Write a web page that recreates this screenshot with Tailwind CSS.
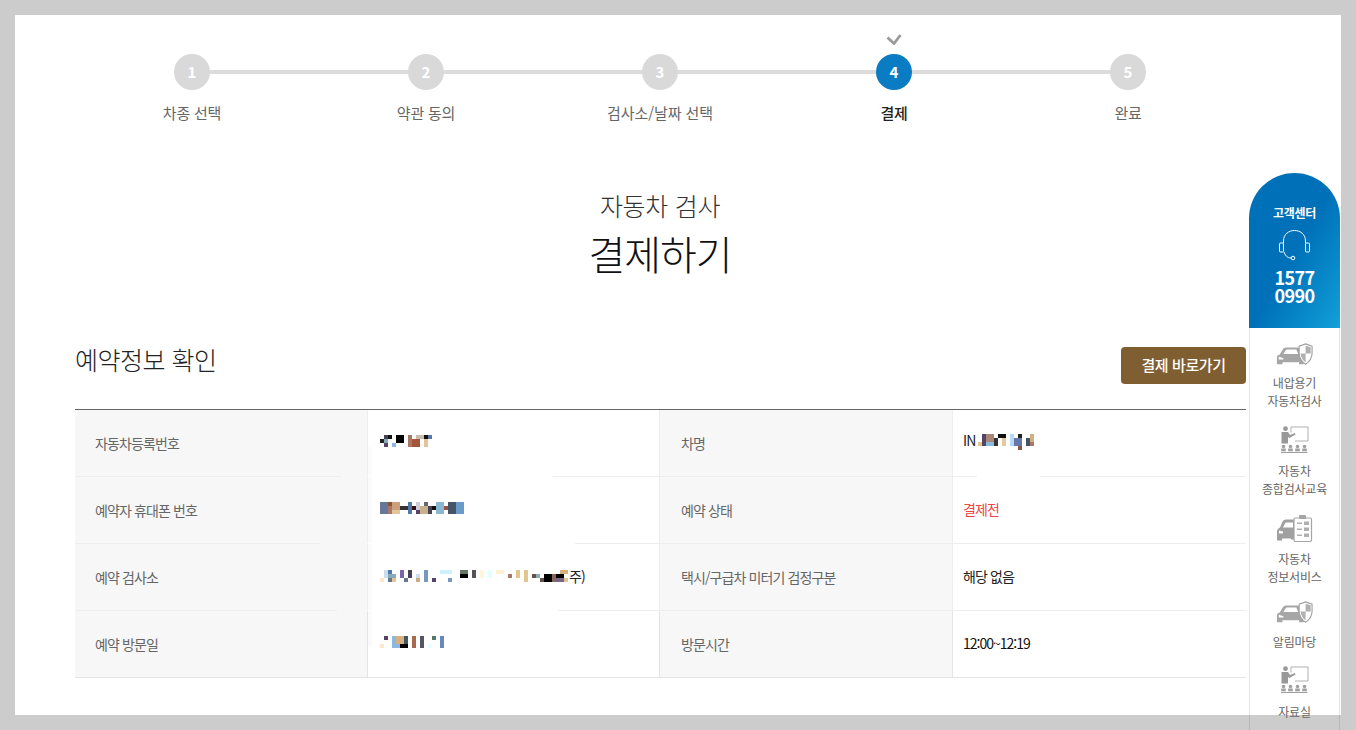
<!DOCTYPE html>
<html lang="ko">
<head>
<meta charset="utf-8">
<title>자동차 검사 결제하기</title>
<script src="https://cdn.jsdelivr.net/npm/@tailwindcss/browser@4"></script>
</head>
<body class="m-0 h-[730px] w-[1356px] overflow-hidden bg-[#cccccc] font-['Noto_Sans_CJK_KR','Noto_Sans',sans-serif]">
<svg class="hidden" width="0" height="0">
  <symbol id="car" viewBox="0 0 40 26">
    <path d="M1 23.500v-7c0-2 1-3 3-3.500l3-5c1-1.500 2-2.500 4-2.500h12c2 0 3 1 4 2l1 3c-1 4 0 9 2 11v2h-5v-2H7v2H1z" fill="#a6a6a6"/>
    <path d="M8 12.500l2.500-4c.5-1 1-1 2-1h9.500l2 5z" fill="#fff"/>
    <path d="M3 15.500l5 1.500v1.500H3z" fill="#fff"/>
    <path d="M32 1.500l7 2.500v7.500c0 5.500-3 9.500-7 12-4-2.500-7-6.500-7-12V4z" fill="#fff" stroke="#a0a0a0" stroke-width="1.200"/>
    <path d="M32 3.500v8.500h5.500V5.200zM32 12v9.500c-3-2-5-5-5.500-9.500z" fill="#b0b0b0"/>
  </symbol>
  <symbol id="teach" viewBox="0 0 30 28">
    <path d="M11 7V1.500h17v14H15" fill="none" stroke="#b0b0b0" stroke-width="1"/>
    <circle cx="5.500" cy="3.200" r="2.400" fill="#999"/>
    <path d="M1.500 6.500h6.500l2 3 5-2 .5 1.500-6 3.500-1.500-1v6.500H1.500z" fill="#999"/>
    <g fill="#a0a0a0">
      <circle cx="3.500" cy="21" r="1.800"/><circle cx="10.500" cy="21" r="1.800"/><circle cx="17.500" cy="21" r="1.800"/><circle cx="24.500" cy="21" r="1.800"/>
      <rect x="1.200" y="23" width="4.600" height="2.800"/><rect x="8.200" y="23" width="4.600" height="2.800"/><rect x="15.200" y="23" width="4.600" height="2.800"/><rect x="22.200" y="23" width="4.600" height="2.800"/>
      <rect x="1" y="26.500" width="26.500" height="1"/>
    </g>
  </symbol>
  <symbol id="clip" viewBox="0 0 36 28">
    <path d="M0 24v-7c0-2 1-3 3-4l2-5c1-2 2-3 4-3h9v20h-4v-1H5v2H0z" fill="#a0a0a0"/>
    <path d="M6 13l2-4c0-1 1-1 2-1h6v5z" fill="#fff"/>
    <path d="M2 16l4 1v2H2z" fill="#fff"/>
    <rect x="17" y="3.500" width="17.500" height="23.500" rx="1.500" fill="#fff" stroke="#a5a5a5" stroke-width="1.200"/>
    <rect x="22" y="0.500" width="7" height="4" rx="1" fill="#a5a5a5"/>
    <g fill="#b0b0b0">
      <rect x="20" y="8" width="5" height="1.500"/><rect x="27" y="7" width="5" height="3.500"/>
      <rect x="20" y="14" width="5" height="1.500"/><rect x="27" y="13" width="5" height="3.500"/>
      <rect x="20" y="20" width="5" height="1.500"/><rect x="27" y="19" width="5" height="3.500"/>
    </g>
  </symbol>
</svg>

<div class="relative mx-[15px] mt-[15px] h-[700px] w-[1326px] bg-white">
  <main class="px-[60px]">
    <!-- steps -->
    <ol class="relative flex h-[115px] w-[1170px] pt-[39px]">
      <li class="absolute left-[117px] top-[55px] h-1 w-[936px] bg-[#dcdcdc]"></li>
      <li class="relative flex w-[234px] flex-col items-center">
        <span class="flex h-9 w-9 items-center justify-center rounded-full bg-[#d9d9d9] text-[15px] font-bold text-white">1</span>
        <span class="mt-[13px] text-[15px] leading-5 tracking-[-0.2px] text-[#666666]">차종 선택</span>
      </li>
      <li class="relative flex w-[234px] flex-col items-center">
        <span class="flex h-9 w-9 items-center justify-center rounded-full bg-[#d9d9d9] text-[15px] font-bold text-white">2</span>
        <span class="mt-[13px] text-[15px] leading-5 tracking-[-0.2px] text-[#666666]">약관 동의</span>
      </li>
      <li class="relative flex w-[234px] flex-col items-center">
        <span class="flex h-9 w-9 items-center justify-center rounded-full bg-[#d9d9d9] text-[15px] font-bold text-white">3</span>
        <span class="mt-[13px] text-[15px] leading-5 tracking-[-0.1px] text-[#666666]">검사소/날짜 선택</span>
      </li>
      <li class="relative flex w-[234px] flex-col items-center">
        <svg class="absolute left-[109px] top-[-21px]" width="16" height="12" viewBox="0 0 16 12"><path d="M1.500 4.500L8 10.500 14.500 2" fill="none" stroke="#9a9a9a" stroke-width="2.800"/></svg>
        <span class="flex h-9 w-9 items-center justify-center rounded-full bg-[#0a7cc4] text-[15px] font-bold text-white">4</span>
        <span class="mt-[13px] text-[15px] font-medium leading-5 tracking-[-0.2px] text-[#222222]">결제</span>
      </li>
      <li class="relative flex w-[234px] flex-col items-center">
        <span class="flex h-9 w-9 items-center justify-center rounded-full bg-[#d9d9d9] text-[15px] font-bold text-white">5</span>
        <span class="mt-[13px] text-[15px] leading-5 tracking-[-0.2px] text-[#666666]">완료</span>
      </li>
    </ol>

    <!-- title -->
    <div class="mt-[57px] flex w-[1170px] flex-col items-center">
      <p class="text-[25px] font-light leading-[36px] tracking-[-0.3px] text-[#333333]">자동차 검사</p>
      <h1 class="mt-[2px] text-[40px] font-light leading-[56px] tracking-[-1.1px] text-[#111111]">결제하기</h1>
    </div>

    <!-- section head -->
    <div class="mt-[66px] flex h-[62px] w-[1171px] items-start justify-between">
      <h2 class="mt-[-6px] text-[25px] font-light leading-[36px] tracking-[-0.5px] text-[#222222]">예약정보 확인</h2>
      <button class="flex h-[37px] w-[125px] items-center justify-center rounded-[4px] bg-[#7f5f32] text-[15px] font-medium tracking-[-0.4px] text-white">결제 바로가기</button>
    </div>

    <!-- table -->
    <div class="relative grid w-[1171px] grid-cols-[293px_292px_293px_293px] border-t border-[#666666] text-[14px] tracking-[-0.9px]">
      <!-- row 1 -->
      <div class="relative flex h-[67px] items-center border-r border-b border-[#eeeeee] bg-[#f7f7f7] pl-5 text-[#666666]">자동차등록번호<i class="absolute bottom-[-1px] left-[266px] right-[-1px] h-px bg-[#f7f7f7]"></i></div>
      <div class="relative flex h-[67px] items-center border-r border-b border-[#eeeeee] pl-3 pb-[4px] text-[#222222]">
        <svg width="53" height="12" shape-rendering="crispEdges"><rect x="0" y="4" width="4" height="4" fill="#222"/><rect x="4" y="0" width="4" height="4" fill="#445"/><rect x="4" y="4" width="4" height="4" fill="#8ab"/><rect x="4" y="8" width="4" height="4" fill="#546"/><rect x="8" y="0" width="4" height="4" fill="#111"/><rect x="12" y="8" width="4" height="4" fill="#8bd"/><rect x="16" y="0" width="8" height="8" fill="#000"/><rect x="28" y="0" width="4" height="12" fill="#a76"/><rect x="32" y="4" width="8" height="8" fill="#a6543a"/><rect x="36" y="0" width="8" height="4" fill="#cba"/><rect x="44" y="4" width="4" height="8" fill="#e3c59a"/><rect x="44" y="0" width="4" height="4" fill="#111"/><rect x="48" y="0" width="4" height="4" fill="#57a"/></svg>
        <i class="absolute bottom-[-1px] left-0 h-px w-[185px] bg-white"></i><i class="absolute bottom-0 left-0 h-[29px] w-1 bg-[#fbfbfb]"></i>
      </div>
      <div class="relative flex h-[67px] items-center border-r border-b border-[#eeeeee] bg-[#f7f7f7] pl-[21px] text-[#666666]">차명</div>
      <div class="relative flex h-[67px] items-center border-b border-[#eeeeee] pl-[10px] pb-[5px] text-[#222222]">IN<svg class="ml-[3px] mt-[2px]" width="60" height="16" shape-rendering="crispEdges"><rect x="0" y="8" width="4" height="4" fill="#e3c58e"/><rect x="4" y="0" width="4" height="12" fill="#546"/><rect x="8" y="0" width="8" height="8" fill="#a87"/><rect x="8" y="8" width="8" height="4" fill="#8bd"/><rect x="16" y="4" width="4" height="8" fill="#333"/><rect x="20" y="0" width="8" height="4" fill="#111"/><rect x="24" y="4" width="4" height="8" fill="#e3c9a0"/><rect x="32" y="0" width="4" height="12" fill="#b6daf5"/><rect x="40" y="0" width="4" height="4" fill="#222"/><rect x="36" y="4" width="8" height="8" fill="#67a"/><rect x="40" y="12" width="4" height="4" fill="#854"/><rect x="48" y="4" width="4" height="8" fill="#456"/><rect x="52" y="0" width="4" height="8" fill="#d3b080"/><rect x="52" y="8" width="4" height="4" fill="#a76"/></svg><i class="absolute bottom-[-1px] left-6 h-px w-[63px] bg-white"></i></div>
      <!-- row 2 -->
      <div class="relative flex h-[67px] items-center border-r border-b border-[#eeeeee] bg-[#f7f7f7] pl-5 text-[#666666]">예약자 휴대폰 번호<i class="absolute bottom-[-1px] left-[245px] right-[-1px] h-px bg-[#f7f7f7]"></i></div>
      <div class="relative flex h-[67px] items-center border-r border-b border-[#eeeeee] pl-3 pb-[4px] text-[#222222]">
        <svg width="84" height="12" shape-rendering="crispEdges"><rect x="0" y="0" width="8" height="12" fill="#667799"/><rect x="8" y="0" width="4" height="4" fill="#853"/><rect x="8" y="4" width="4" height="8" fill="#a76"/><rect x="12" y="0" width="8" height="8" fill="#cba07a"/><rect x="12" y="8" width="8" height="4" fill="#e3c59a"/><rect x="20" y="4" width="8" height="4" fill="#333"/><rect x="28" y="0" width="4" height="12" fill="#57a"/><rect x="32" y="4" width="4" height="4" fill="#311"/><rect x="36" y="0" width="4" height="8" fill="#ccd"/><rect x="36" y="8" width="4" height="4" fill="#546"/><rect x="40" y="4" width="8" height="8" fill="#c9b08a"/><rect x="44" y="0" width="4" height="4" fill="#667"/><rect x="48" y="4" width="4" height="8" fill="#445"/><rect x="52" y="4" width="4" height="4" fill="#111"/><rect x="56" y="0" width="8" height="12" fill="#8ab8d0"/><rect x="64" y="4" width="4" height="4" fill="#954"/><rect x="68" y="0" width="8" height="12" fill="#456"/><rect x="76" y="0" width="8" height="12" fill="#6a9ac8"/></svg>
        <i class="absolute bottom-[-1px] left-0 h-px w-[207px] bg-white"></i><i class="absolute inset-y-0 left-0 w-1 bg-[#fbfbfb]"></i>
      </div>
      <div class="relative flex h-[67px] items-center border-r border-b border-[#eeeeee] bg-[#f7f7f7] pl-[21px] text-[#666666]">예약 상태</div>
      <div class="relative flex h-[67px] items-center border-b border-[#eeeeee] pl-[10px] pb-[2px] text-[#ee4444]">결제전</div>
      <!-- row 3 -->
      <div class="relative flex h-[67px] items-center border-r border-b border-[#eeeeee] bg-[#f7f7f7] pl-5 text-[#666666]">예약 검사소<i class="absolute bottom-[-1px] left-[262px] right-[-1px] h-px bg-[#f7f7f7]"></i></div>
      <div class="relative flex h-[67px] items-center border-r border-b border-[#eeeeee] pl-3 pb-[2px] text-[#222222]">
        <svg width="190" height="12" shape-rendering="crispEdges"><rect x="0" y="8" width="4" height="4" fill="#fde8cc"/><rect x="4" y="0" width="4" height="8" fill="#cde"/><rect x="8" y="0" width="4" height="4" fill="#57a"/><rect x="8" y="4" width="8" height="4" fill="#8ab"/><rect x="8" y="8" width="4" height="4" fill="#678"/><rect x="12" y="8" width="4" height="4" fill="#e3c59a"/><rect x="20" y="0" width="4" height="8" fill="#76a"/><rect x="24" y="8" width="4" height="4" fill="#678"/><rect x="28" y="0" width="4" height="8" fill="#445"/><rect x="36" y="4" width="4" height="4" fill="#cde"/><rect x="36" y="8" width="4" height="4" fill="#ca8"/><rect x="44" y="0" width="4" height="12" fill="#79b"/><rect x="52" y="8" width="4" height="4" fill="#546"/><rect x="60" y="0" width="12" height="4" fill="#cdf0ff"/><rect x="68" y="8" width="4" height="4" fill="#79b"/><rect x="80" y="0" width="8" height="4" fill="#676"/><rect x="80" y="4" width="8" height="4" fill="#000"/><rect x="92" y="0" width="4" height="8" fill="#555"/><rect x="100" y="0" width="4" height="8" fill="#fdf6dc"/><rect x="108" y="0" width="4" height="8" fill="#e0ffff"/><rect x="116" y="0" width="8" height="4" fill="#fff0d0"/><rect x="128" y="4" width="4" height="4" fill="#a76"/><rect x="136" y="0" width="4" height="8" fill="#e3c58e"/><rect x="144" y="0" width="4" height="12" fill="#e3c58e"/><rect x="152" y="4" width="4" height="4" fill="#654"/><rect x="156" y="4" width="4" height="4" fill="#8ab"/><rect x="160" y="8" width="4" height="4" fill="#654"/><rect x="164" y="4" width="8" height="8" fill="#000"/><rect x="172" y="4" width="4" height="8" fill="#865"/><rect x="176" y="4" width="8" height="4" fill="#000"/><rect x="176" y="8" width="8" height="4" fill="#768"/><rect x="180" y="0" width="8" height="4" fill="#d8b080"/><rect x="184" y="8" width="4" height="4" fill="#e3c58e"/></svg><span class="ml-[-1px]">주)</span>
        <i class="absolute bottom-[-1px] left-0 h-px w-[190px] bg-white"></i><i class="absolute inset-y-0 left-0 w-1 bg-[#fbfbfb]"></i>
      </div>
      <div class="relative flex h-[67px] items-center border-r border-b border-[#eeeeee] bg-[#f7f7f7] pl-[21px] text-[#666666]">택시/구급차 미터기 검정구분</div>
      <div class="relative flex h-[67px] items-center border-b border-[#eeeeee] pl-[10px] pb-[2px] text-[#222222]">해당 없음</div>
      <!-- row 4 -->
      <div class="relative flex h-[67px] items-center border-r border-b border-[#e4e4e4] bg-[#f7f7f7] pl-5 text-[#666666]">예약 방문일</div>
      <div class="relative flex h-[67px] items-center border-r border-b border-[#e4e4e4] pl-3 pb-[4px] text-[#222222]">
        <svg width="64" height="12" shape-rendering="crispEdges"><rect x="0" y="8" width="4" height="4" fill="#fde8cc"/><rect x="4" y="0" width="4" height="4" fill="#546"/><rect x="12" y="0" width="8" height="12" fill="#8ab8e0"/><rect x="16" y="0" width="8" height="8" fill="#d8b080"/><rect x="20" y="8" width="8" height="4" fill="#000"/><rect x="24" y="0" width="4" height="8" fill="#456"/><rect x="32" y="0" width="4" height="12" fill="#a76a50"/><rect x="40" y="0" width="4" height="12" fill="#556"/><rect x="48" y="8" width="4" height="4" fill="#e8ffff"/><rect x="52" y="0" width="4" height="4" fill="#576"/><rect x="60" y="0" width="4" height="12" fill="#68b"/></svg>
        <i class="absolute top-0 left-0 h-[36px] w-1 bg-[#fbfbfb]"></i>
      </div>
      <div class="relative flex h-[67px] items-center border-r border-b border-[#e4e4e4] bg-[#f7f7f7] pl-[21px] text-[#666666]">방문시간</div>
      <div class="relative flex h-[67px] items-center border-b border-[#e4e4e4] pl-[10px] pb-[2px] text-[#111111] tracking-[-1px]">12:00~12:19</div>
    </div>
  </main>
</div>

<!-- floating side nav -->
<aside class="absolute left-[1249px] top-[173px] h-[557px] w-[91px] text-center text-[12px] leading-[18px] text-[#666666]">
  <div class="flex h-[155px] flex-col items-center rounded-t-[46px] bg-gradient-to-br from-[#0070b8] from-50% to-[#13a0d8] pt-[31px] text-white">
    <p class="text-[12px] font-bold leading-[18px] tracking-[-0.3px]">고객센터</p>
    <svg class="mt-[8px]" width="32" height="32" viewBox="0 0 32 32" fill="none" stroke="#fff" stroke-width="1"><path d="M4.500 13v-2C4.500 4 10 .5 15.500 .5S26.500 4 26.500 11v2"/><rect x=".5" y="13" width="4" height="9" rx="1"/><rect x="26.500" y="13" width="4" height="9" rx="1"/><path d="M5 22c1 3 3 6 7 6"/><circle cx="14" cy="28" r="1.800"/></svg>
    <p class="mt-[6px] text-[18px] font-bold leading-[18px] tracking-[-0.6px]">1577<br>0990</p>
  </div>
  <div class="relative h-[402px] border-x border-black/10">
    <div class="absolute inset-x-0 top-0 h-[387px] bg-white"></div>
    <div class="relative">
      <a class="flex h-[88px] flex-col items-center pt-[14px]"><svg width="37" height="25"><use href="#car"/></svg><span class="mt-[7px] tracking-[-0.2px]">내압용기<br>자동차검사</span></a>
      <a class="flex h-[88px] flex-col items-center pt-[9px]"><svg width="30" height="29"><use href="#teach"/></svg><span class="mt-[8px] tracking-[-0.2px]">자동차<br>종합검사교육</span></a>
      <a class="flex h-[86px] flex-col items-center pt-[10px]"><svg width="36" height="29"><use href="#clip"/></svg><span class="mt-[7px] tracking-[-0.2px]">자동차<br>정보서비스</span></a>
      <a class="flex h-[66px] flex-col items-center pt-[10px]"><svg width="37" height="25"><use href="#car"/></svg><span class="mt-[8px] tracking-[-0.2px]">알림마당</span></a>
      <a class="flex flex-col items-center pt-[9px]"><svg width="30" height="29"><use href="#teach"/></svg><span class="mt-[9px] tracking-[-0.2px]">자료실</span></a>
    </div>
  </div>
</aside>
</body>
</html>
